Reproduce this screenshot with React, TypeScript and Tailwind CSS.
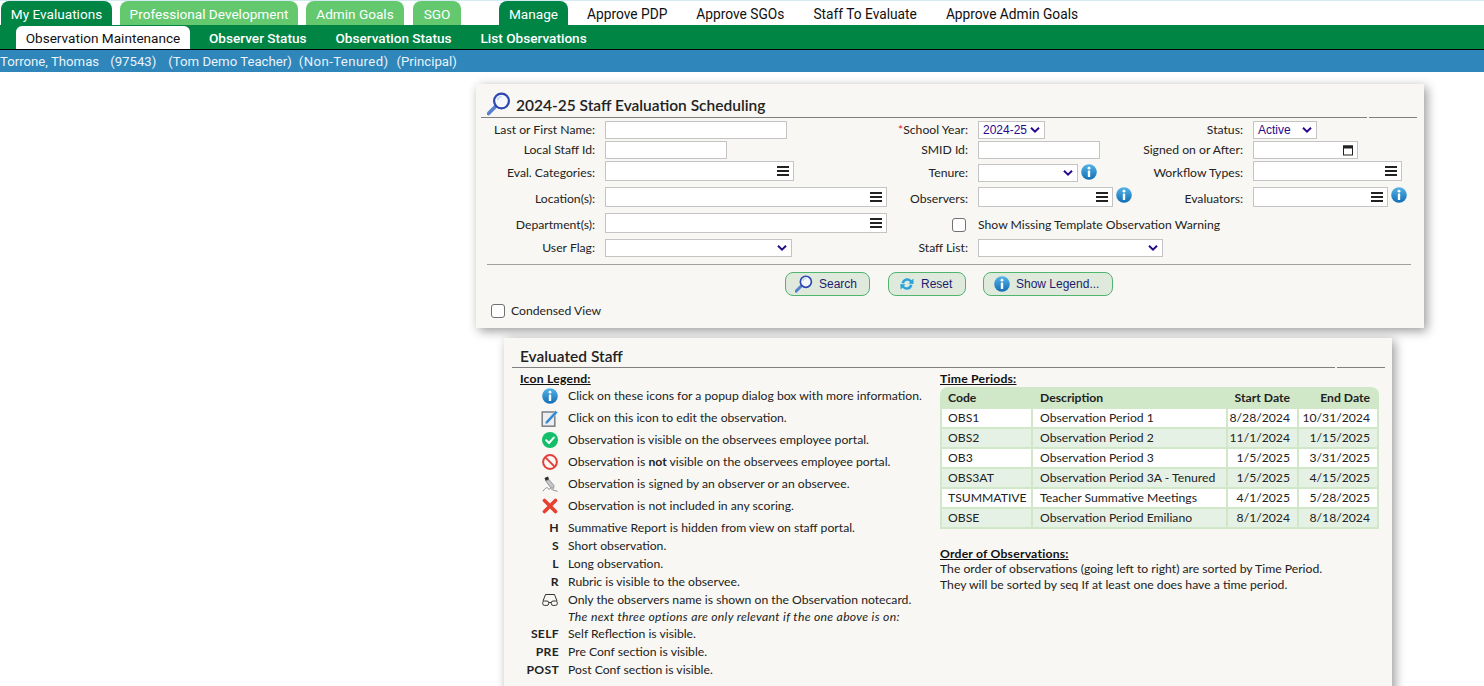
import type { ReactNode } from 'react';

function InfoIcon({ size = 16 }: { size?: number }) {
  return (
    <svg width={size} height={size} viewBox="0 0 16 16" className="shrink-0">
      <defs>
        <linearGradient id="infoFill" x1="0" y1="0" x2="0" y2="1">
          <stop offset="0" stopColor="#57b4e8" />
          <stop offset="1" stopColor="#0f6db5" />
        </linearGradient>
      </defs>
      <circle cx="8" cy="8" r="7.8" fill="url(#infoFill)" />
      <circle cx="8" cy="4.2" r="1.4" fill="#fff" />
      <rect x="6.8" y="6.6" width="2.4" height="6.4" rx="0.5" fill="#fff" />
    </svg>
  );
}

function MagnifierIcon({ size = 24 }: { size?: number }) {
  return (
    <svg width={size} height={size} viewBox="0 0 24 24" className="shrink-0">
      <path d="M1.5 21.5 L9 14" stroke="#5a7fd0" strokeWidth="3.8" strokeLinecap="round" />
      <circle cx="14.5" cy="9" r="7.4" fill="#f4f8fd" stroke="#2d46b0" strokeWidth="2.2" />
      <path d="M10.5 8 a4.5 4.5 0 0 1 4 -3.6" stroke="#bcd3f1" strokeWidth="1.4" fill="none" />
    </svg>
  );
}

function RefreshIcon() {
  return (
    <svg width="16" height="16" viewBox="0 0 16 16" className="shrink-0">
      <path d="M2.6 7 A5.6 5.6 0 0 1 12.4 4.2 L14.4 2.6 L14.6 8 L9.4 7.6 L11 6 A3.4 3.4 0 0 0 5 7.4 Z" fill="#2aa3dc" />
      <path d="M13.4 9 A5.6 5.6 0 0 1 3.6 11.8 L1.6 13.4 L1.4 8 L6.6 8.4 L5 10 A3.4 3.4 0 0 0 11 8.6 Z" fill="#2aa3dc" />
    </svg>
  );
}

function EditIcon() {
  return (
    <svg width="17" height="17" viewBox="0 0 17 17">
      <rect x="1.2" y="2" width="12.6" height="14.2" fill="#eceef0" stroke="#7a7e84" strokeWidth="1.5" />
      <path d="M4.6 11.6 L14.6 0.6 L16.8 2.6 L6.6 13.4 L4 14.2 Z" fill="#2f86d0" stroke="#f8f7f3" strokeWidth="0.5" />
    </svg>
  );
}

function CheckIcon() {
  return (
    <svg width="16" height="16" viewBox="0 0 16 16">
      <circle cx="8" cy="8" r="8" fill="#12bf68" />
      <path d="M4.2 8.2 L7 11 L11.8 5.6" stroke="#fff" strokeWidth="2" fill="none" strokeLinecap="round" />
    </svg>
  );
}

function NoIcon() {
  return (
    <svg width="16" height="16" viewBox="0 0 16 16">
      <circle cx="8" cy="8" r="6.9" fill="none" stroke="#e0413b" strokeWidth="2" />
      <path d="M3.4 3.4 L12.6 12.6" stroke="#e0413b" strokeWidth="2" />
    </svg>
  );
}

function SignedIcon() {
  return (
    <svg width="16" height="16" viewBox="0 0 16 16">
      <path d="M2.5 2 L6 0.5 L7.2 3.5 L3.6 5 Z" fill="#2f2f33" />
      <path d="M3.8 4.8 L7 3.6 L12 9.5 L11.6 12.5 L8.4 11.4 Z" fill="#c4c6ca" stroke="#66696d" strokeWidth="0.6" />
      <path d="M1 15.2 C3 12.5 5 10.5 6 12.4 C7 14.2 8 11.8 9.5 13 C11 14.2 13 14.8 15.5 15.2" stroke="#7c7f84" strokeWidth="0.9" fill="none" />
    </svg>
  );
}

function CrossIcon() {
  return (
    <svg width="16" height="16" viewBox="0 0 16 16">
      <path d="M2.5 2.5 L13.5 13.5 M13.5 2.5 L2.5 13.5" stroke="#e8402f" strokeWidth="3.6" strokeLinecap="round" />
    </svg>
  );
}

function GlassesIcon() {
  return (
    <svg width="16" height="14" viewBox="0 0 16 14" fill="none" stroke="#333" strokeWidth="1">
      <path d="M1 8 L3.5 1.5 H12.5 L15 8" />
      <rect x="0.7" y="8" width="6" height="4.4" rx="1.8" />
      <rect x="9.3" y="8" width="6" height="4.4" rx="1.8" />
      <path d="M6.7 9.5 H9.3" />
    </svg>
  );
}

function Burger() {
  return (
    <span className="absolute right-[4px] top-1/2 flex -translate-y-1/2 flex-col gap-[2px]">
      <span className="h-[2px] w-[12px] bg-[#222]" />
      <span className="h-[2px] w-[12px] bg-[#222]" />
      <span className="h-[2px] w-[12px] bg-[#222]" />
    </span>
  );
}

function Chevron() {
  return (
    <svg width="10" height="7" viewBox="0 0 10 7" className="absolute right-[4px] top-1/2 -translate-y-1/2">
      <path d="M1 1.2 L5 5.2 L9 1.2" stroke="#2a0a8c" strokeWidth="2" fill="none" />
    </svg>
  );
}

function Box({ className, children }: { className: string; children?: ReactNode }) {
  return <div className={`relative border border-[#c4c4c4] bg-white ${className}`}>{children}</div>;
}

function Multi({ className }: { className: string }) {
  return (
    <Box className={`h-[20px] ${className}`}>
      <Burger />
    </Box>
  );
}

function Select({ className, value }: { className: string; value?: string }) {
  return (
    <Box className={`h-[18px] pl-[4px] text-[12px] leading-[16px] text-[#2a0a8c] [font-family:'Liberation_Sans',sans-serif] ${className}`}>
      {value}
      <Chevron />
    </Box>
  );
}

function Label({ children, h = 'h-[18px]' }: { children: ReactNode; h?: string }) {
  return <div className={`flex items-center justify-end whitespace-nowrap pr-[10px] ${h}`}>{children}</div>;
}

function Check() {
  return <span className="block h-[14px] w-[14px] rounded-[3px] border border-[#707070] bg-white" />;
}

function Btn({ icon, label, className }: { icon: ReactNode; label: string; className: string }) {
  return (
    <button className={`flex h-[24px] items-center rounded-[8px] border border-[#4fb56f] bg-[#dfeadc] text-[12px] text-[#1e1a6e] [font-family:'Liberation_Sans',sans-serif] ${className}`}>
      {icon}
      <span>{label}</span>
    </button>
  );
}

function PanelHead({ title, icon, right, h, pb }: { title: string; icon?: ReactNode; right: string; h: string; pb: string }) {
  return (
    <div className={`flex ${h}`}>
      <div className={`flex flex-1 items-end gap-[5px] border-b border-[#808080] ${pb}`}>
        {icon}
        <h2 className="text-[15.5px] font-semibold leading-[20px] text-[#222]">{title}</h2>
      </div>
      <div className={`ml-[2px] border-b border-[#808080] ${right}`} />
    </div>
  );
}

const legendTop = [
  { icon: <InfoIcon />, text: <>Click on these icons for a popup dialog box with more information.</> },
  { icon: <EditIcon />, text: <>Click on this icon to edit the observation.</> },
  { icon: <CheckIcon />, text: <>Observation is visible on the observees employee portal.</> },
  { icon: <NoIcon />, text: <>Observation is <b>not</b> visible on the observees employee portal.</> },
  { icon: <SignedIcon />, text: <>Observation is signed by an observer or an observee.</> },
  { icon: <CrossIcon />, text: <>Observation is not included in any scoring.</> },
];

const legendMid = [
  { icon: 'H', text: 'Summative Report is hidden from view on staff portal.' },
  { icon: 'S', text: 'Short observation.' },
  { icon: 'L', text: 'Long observation.' },
  { icon: 'R', text: 'Rubric is visible to the observee.' },
];

const legendEnd = [
  { icon: 'SELF', text: 'Self Reflection is visible.' },
  { icon: 'PRE', text: 'Pre Conf section is visible.' },
  { icon: 'POST', text: 'Post Conf section is visible.' },
];

const periods = [
  ['OBS1', 'Observation Period 1', '8/28/2024', '10/31/2024'],
  ['OBS2', 'Observation Period 2', '11/1/2024', '1/15/2025'],
  ['OB3', 'Observation Period 3', '1/5/2025', '3/31/2025'],
  ['OBS3AT', 'Observation Period 3A - Tenured', '1/5/2025', '4/15/2025'],
  ['TSUMMATIVE', 'Teacher Summative Meetings', '4/1/2025', '5/28/2025'],
  ['OBSE', 'Observation Period Emiliano', '8/1/2024', '8/18/2024'],
];

function LegendRow({ icon, text, h, bold }: { icon: ReactNode; text: ReactNode; h: string; bold?: boolean }) {
  return (
    <div className={`flex items-center ${h}`}>
      <div className={`flex w-[39px] shrink-0 justify-end whitespace-nowrap ${bold ? 'font-bold tracking-[0.3px] text-[#222]' : 'pr-[1px]'}`}>{icon}</div>
      <div className="ml-[9px] whitespace-nowrap">{text}</div>
    </div>
  );
}

export default function App() {
  const tabFont = "[font-family:'Roboto',sans-serif] text-[13.6px]";
  const headCls = 'font-bold tracking-[0.2px] text-[#111] underline';
  return (
    <div className="h-[686px] overflow-hidden bg-white text-[12.2px] text-[#222] [font-family:'Lato',sans-serif]">
      {/* top tabs */}
      <div className={`flex h-[25px] items-end border-t border-[#d6eaf3] pl-[1px] text-white ${tabFont}`}>
        <div className="flex h-[24px] w-[111px] items-center justify-center rounded-t-[8px] bg-[#008545] pt-[3px]">My Evaluations</div>
        <div className="ml-[8px] flex h-[24px] w-[178px] items-center justify-center rounded-t-[8px] bg-[#64c86f] pt-[3px]">Professional Development</div>
        <div className="ml-[8px] flex h-[24px] w-[98px] items-center justify-center rounded-t-[8px] bg-[#64c86f] pt-[3px]">Admin Goals</div>
        <div className="ml-[9px] flex h-[24px] w-[48px] items-center justify-center rounded-t-[8px] bg-[#64c86f] pt-[3px]">SGO</div>
        <div className="ml-[38px] flex h-[24px] w-[69px] items-center justify-center rounded-t-[8px] bg-[#008545] pt-[3px]">Manage</div>
        <div className="flex h-[24px] items-center gap-[29px] pl-[19px] pt-[3px] text-[13.75px] text-[#111]">
          <span>Approve PDP</span>
          <span>Approve SGOs</span>
          <span>Staff To Evaluate</span>
          <span>Approve Admin Goals</span>
        </div>
      </div>
      {/* sub tabs */}
      <div className={`flex h-[25px] items-end border-b border-black bg-[#008545] pl-[16px] font-medium text-white ${tabFont}`}>
        <div className="flex h-[23px] w-[174px] items-center justify-center rounded-t-[6px] bg-white pt-[1px] font-normal text-[#111]">Observation Maintenance</div>
        <div className="flex h-[23px] items-center gap-[29px] pl-[19px] pt-[1px]">
          <span>Observer Status</span>
          <span>Observation Status</span>
          <span>List Observations</span>
        </div>
      </div>
      <div className="flex h-[22px] items-center gap-[11px] whitespace-nowrap bg-[#2e86bb] pt-[1px] text-[13.2px] text-[#e9f3f9] [font-family:'Roboto',sans-serif]">
        <span>Torrone, Thomas</span>
        <span>(97543)</span>
        <span className="ml-[1px]">(Tom Demo Teacher)</span>
        <span className="-ml-[4px] tracking-[0.4px]">(Non-Tenured)</span>
        <span className="-ml-[3px]">(Principal)</span>
      </div>

      {/* search panel */}
      <div className="ml-[476px] mt-[12px] h-[244px] w-[948px] bg-[#f8f7f3] shadow-[3px_3px_10px_rgba(0,0,0,0.4)]">
        <div className="pl-[5px] pr-[7px]">
          <PanelHead title="2024-25 Staff Evaluation Scheduling" h="h-[34px]" pb="pb-[1px] [&_h2]:mb-[1px]" icon={<span className="ml-[6px]"><MagnifierIcon /></span>} right="w-[48px]" />
        </div>
        <div className="mt-[3px] grid grid-cols-[129px_292px_81px_155px_120px_171px] grid-rows-[20px_20px_26px_26px_26px_18px]">
          <Label>Last or First Name:</Label>
          <Box className="h-[18px] w-[182px]" />
          <Label><span><span className="text-[#e02020]">*</span>School Year:</span></Label>
          <Select className="w-[67px]" value="2024-25" />
          <Label>Status:</Label>
          <Select className="w-[64px]" value="Active" />

          <Label>Local Staff Id:</Label>
          <Box className="h-[18px] w-[122px]" />
          <Label>SMID Id:</Label>
          <Box className="h-[18px] w-[122px]" />
          <Label>Signed on or After:</Label>
          <Box className="h-[18px] w-[105px]">
            <svg width="12" height="12" viewBox="0 0 12 12" className="absolute right-[3px] top-[2px]" fill="none" stroke="#222">
              <rect x="1.5" y="2" width="9" height="9" />
              <rect x="1.5" y="2" width="9" height="2" fill="#222" />
            </svg>
          </Box>

          <Label h="h-[24px]">Eval. Categories:</Label>
          <Multi className="w-[189px]" />
          <Label h="h-[24px]">Tenure:</Label>
          <div className="flex items-start gap-[3px]">
            <Select className="mt-[3px] w-[100px]" />
            <span className="mt-[3px]"><InfoIcon /></span>
          </div>
          <Label h="h-[24px]">Workflow Types:</Label>
          <Multi className="w-[149px]" />

          <Label h="h-[24px]">Location(s):</Label>
          <Multi className="w-[282px]" />
          <Label h="h-[24px]">Observers:</Label>
          <div className="flex items-start gap-[3px]">
            <Multi className="w-[135px]" />
            <InfoIcon />
          </div>
          <Label h="h-[24px]">Evaluators:</Label>
          <div className="flex items-start gap-[3px]">
            <Multi className="w-[135px]" />
            <InfoIcon />
          </div>

          <Label h="h-[24px]">Department(s):</Label>
          <Multi className="w-[282px]" />
          <Label h="h-[24px]"><span className="pr-[2px]"><Check /></span></Label>
          <div className="col-span-3 flex h-[24px] items-center">Show Missing Template Observation Warning</div>

          <Label>User Flag:</Label>
          <Select className="w-[187px]" />
          <Label>Staff List:</Label>
          <Select className="w-[185px]" />
        </div>
        <div className="ml-[11px] mt-[7px] w-[924px] border-t border-[#a0a0a0]" />
        <div className="ml-[309px] mt-[7px] flex">
          <Btn icon={<span className="ml-[9px] mr-[6px]"><MagnifierIcon size={18} /></span>} label="Search" className="w-[85px]" />
          <Btn icon={<span className="ml-[10px] mr-[6px]"><RefreshIcon /></span>} label="Reset" className="ml-[18px] w-[78px]" />
          <Btn icon={<span className="ml-[10px] mr-[6px]"><InfoIcon /></span>} label="Show Legend..." className="ml-[17px] w-[130px]" />
        </div>
        <div className="ml-[15px] mt-[6px] flex items-center gap-[6px]">
          <Check />
          <span>Condensed View</span>
        </div>
      </div>

      {/* evaluated staff panel */}
      <div className="ml-[504px] mt-[10px] h-[360px] w-[888px] bg-[#f8f7f3] shadow-[3px_3px_10px_rgba(0,0,0,0.4)]">
        <div className="pl-[8px] pr-[7px]">
          <div className="[&_h2]:ml-[8px]">
            <PanelHead title="Evaluated Staff" h="h-[30px]" pb="pb-[1px]" right="w-[48px]" />
          </div>
        </div>
        <div className="mt-[2px] flex">
          <div className="ml-[16px] w-[420px] shrink-0">
            <div className={`h-[15px] leading-[18px] ${headCls}`}>Icon Legend:</div>
            {legendTop.map((row, i) => (
              <LegendRow key={i} icon={row.icon} text={row.text} h="h-[22px]" />
            ))}
            <div className="h-[2px]" />
            {legendMid.map((row) => (
              <LegendRow key={row.icon} icon={row.icon} text={row.text} h="h-[18px]" bold />
            ))}
            <LegendRow icon={<GlassesIcon />} text="Only the observers name is shown on the Observation notecard." h="h-[18px]" />
            <LegendRow icon="" text={<i className="tracking-[0.3px]">The next three options are only relevant if the one above is on:</i>} h="h-[16px]" />
            {legendEnd.map((row) => (
              <LegendRow key={row.icon} icon={row.icon} text={row.text} h="h-[18px]" bold />
            ))}
          </div>
          <div className="w-[439px]">
            <div className={`h-[17px] leading-[18px] ${headCls}`}>Time Periods:</div>
            <table className="w-[439px] table-fixed border-separate border-spacing-[2px] rounded-t-[8px] bg-[#d0e8c8] leading-[14px]">
              <colgroup>
                <col className="w-[89px]" />
                <col className="w-[193px]" />
                <col className="w-[69px]" />
                <col className="w-[78px]" />
              </colgroup>
              <thead>
                <tr className="h-[18px] font-bold">
                  <th className="pl-[6px] text-left font-bold">Code</th>
                  <th className="pl-[7px] text-left font-bold">Description</th>
                  <th className="pr-[7px] text-right font-bold">Start Date</th>
                  <th className="pr-[7px] text-right font-bold">End Date</th>
                </tr>
              </thead>
              <tbody>
                {periods.map((p, i) => (
                  <tr key={p[0]} className={`h-[18px] ${i % 2 ? 'bg-[#e6f1e6]' : 'bg-white'}`}>
                    <td className="whitespace-nowrap pl-[6px]">{p[0]}</td>
                    <td className="whitespace-nowrap pl-[7px]">{p[1]}</td>
                    <td className="pr-[7px] text-right">{p[2]}</td>
                    <td className="pr-[7px] text-right">{p[3]}</td>
                  </tr>
                ))}
              </tbody>
            </table>
            <div className={`mt-[17px] h-[15px] leading-[16px] ${headCls}`}>Order of Observations:</div>
            <div className="leading-[16px]">The order of observations (going left to right) are sorted by Time Period.</div>
            <div className="leading-[16px]">They will be sorted by seq If at least one does have a time period.</div>
          </div>
        </div>
      </div>
    </div>
  );
}
